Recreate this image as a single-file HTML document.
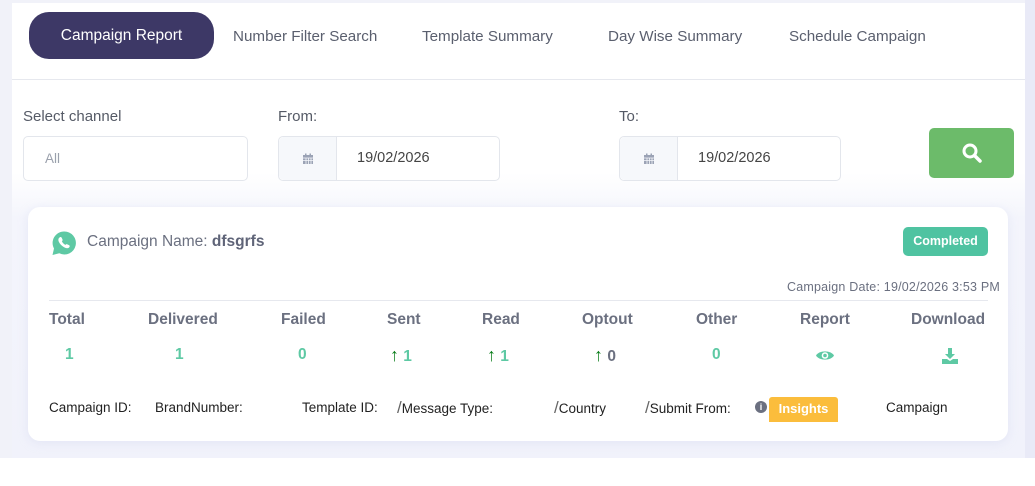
<!DOCTYPE html>
<html><head><style>
*{margin:0;padding:0;box-sizing:border-box}
body{width:1035px;height:486px;background:#fff;font-family:"Liberation Sans",sans-serif;position:relative;overflow:hidden;color:#555}
.a{position:absolute;white-space:nowrap}
.bgl{position:absolute;left:0;top:0;width:12px;height:458px;background:#f1f2f9}
.bgr{position:absolute;left:1025px;top:0;width:10px;height:458px;background:#e9eaf7}
.bgt{position:absolute;left:0;top:0;width:1035px;height:3px;background:#f1f2f9}
.panel{position:absolute;left:12px;top:3px;width:1013px;height:455px;border-radius:10px 10px 0 0;background:linear-gradient(#fff 0,#fff 170px,#f4f5fc 215px,#f1f2fb 455px)}
.tab{font-size:15.2px;color:#5a5f6e;top:28px}
.inp{position:absolute;border:1px solid #e3e6ec;border-radius:5px;background:#fff;height:45px}
.cal{position:absolute;left:0;top:0;width:58px;height:43px;background:#f6f8fb;border-right:1px solid #e3e6ec;border-radius:5px 0 0 5px}
.lbl{font-size:15px;color:#555a66;top:108px}
.h{font-size:15.5px;font-weight:bold;color:#6b7080;top:311px}
.v{font-size:15.5px;font-weight:bold;color:#5ec9a4;top:346px;line-height:18px}
.ar{color:#0a7d1a;font-size:18px;font-weight:bold}
.f{font-size:13.5px;color:#222;top:399px;line-height:18px}
.sl{font-size:17px;color:#666;line-height:18px}
</style></head><body>
<div class="bgt"></div><div class="bgl"></div><div class="bgr"></div>
<div class="panel"></div>
<div class="a" style="left:12px;top:79px;width:1013px;height:1px;background:#e6e8ee"></div>
<div class="a" style="left:29px;top:12px;width:185px;height:47px;border-radius:20px;background:#3d3866;color:#fff;font-size:15.5px;text-align:center;line-height:47px">Campaign Report</div>
<div class="a tab" style="left:233px">Number Filter Search</div>
<div class="a tab" style="left:422px">Template Summary</div>
<div class="a tab" style="left:608px">Day Wise Summary</div>
<div class="a tab" style="left:789px">Schedule Campaign</div>

<div class="a lbl" style="left:23px">Select channel</div>
<div class="a lbl" style="left:278px">From:</div>
<div class="a lbl" style="left:619px">To:</div>
<div class="inp" style="left:23px;top:136px;width:225px"><span class="a" style="left:21px;top:14px;font-size:13.5px;color:#9aa0ac">All</span></div>
<div class="inp" style="left:278px;top:136px;width:222px"><div class="cal"><svg class="a" style="left:23px;top:16px" width="12" height="12" viewBox="0 0 12 12"><rect x="1" y="2" width="10" height="9" fill="#9ba3b5"/><rect x="3" y="0.5" width="1.5" height="3" fill="#9ba3b5"/><rect x="7.5" y="0.5" width="1.5" height="3" fill="#9ba3b5"/><path d="M1 5H11M1 7.5H11M4 5V11M6.5 5V11M9 5V11" stroke="#f6f8fb" stroke-width=".8"/></svg></div><span class="a" style="left:78px;top:13px;font-size:14.5px;color:#444">19/02/2026</span></div>
<div class="inp" style="left:619px;top:136px;width:222px"><div class="cal"><svg class="a" style="left:23px;top:16px" width="12" height="12" viewBox="0 0 12 12"><rect x="1" y="2" width="10" height="9" fill="#9ba3b5"/><rect x="3" y="0.5" width="1.5" height="3" fill="#9ba3b5"/><rect x="7.5" y="0.5" width="1.5" height="3" fill="#9ba3b5"/><path d="M1 5H11M1 7.5H11M4 5V11M6.5 5V11M9 5V11" stroke="#f6f8fb" stroke-width=".8"/></svg></div><span class="a" style="left:78px;top:13px;font-size:14.5px;color:#444">19/02/2026</span></div>
<div class="a" style="left:929px;top:128px;width:85px;height:50px;background:#6cbb6a;border-radius:5px"><svg class="a" style="left:32px;top:14px" width="22" height="22" viewBox="0 0 22 22"><circle cx="9" cy="9" r="6" fill="none" stroke="#fff" stroke-width="3"/><path d="M13.5 13.5L19 19" stroke="#fff" stroke-width="3.5" stroke-linecap="round"/></svg></div>

<div class="a" style="left:28px;top:207px;width:980px;height:234px;background:#fff;border-radius:12px;box-shadow:0 2px 10px rgba(200,205,235,.35)"></div>
<svg class="a" style="left:51px;top:230px" width="26" height="26" viewBox="0 0 26 26"><path d="M13 1.5A11.5 11.5 0 0 0 3 18.5L1.5 25l6.8-1.7A11.5 11.5 0 1 0 13 1.5z" fill="#5ec9a4"/><path d="M8.5 7.5c1-.8 1.8-.5 2.2.3l.9 2c.2.6-.2 1-.7 1.5.6 1.5 2 2.9 3.6 3.6.5-.5.9-1 1.5-.7l2 .9c.8.4 1 1.2.3 2.2-1 1.3-3 1.3-5.2 0-2.3-1.3-4.3-3.3-5.3-5.5-.8-1.8-.5-3.4.7-4.3z" fill="#fff"/></svg>
<div class="a" style="left:87px;top:233px;font-size:15.5px;color:#6b7080">Campaign Name: <b style="color:#5f6478">dfsgrfs</b></div>
<div class="a" style="left:903px;top:227px;width:85px;height:29px;background:#4fc3a1;border-radius:5px;color:#fff;font-size:12.5px;font-weight:bold;text-align:center;line-height:29px">Completed</div>
<div class="a" style="left:787px;top:280px;font-size:12.5px;color:#6b7080;letter-spacing:.2px">Campaign Date: 19/02/2026 3:53 PM</div>
<div class="a" style="left:49px;top:300px;width:939px;height:1px;background:#e6e8ee"></div>

<div class="a h" style="left:49px">Total</div>
<div class="a h" style="left:148px">Delivered</div>
<div class="a h" style="left:281px">Failed</div>
<div class="a h" style="left:387px">Sent</div>
<div class="a h" style="left:482px">Read</div>
<div class="a h" style="left:582px">Optout</div>
<div class="a h" style="left:696px">Other</div>
<div class="a h" style="left:800px">Report</div>
<div class="a h" style="left:911px">Download</div>

<div class="a v" style="left:65px">1</div>
<div class="a v" style="left:175px">1</div>
<div class="a v" style="left:298px">0</div>
<div class="a v" style="left:390px"><span class="ar">&#8593;</span> 1</div>
<div class="a v" style="left:487px"><span class="ar">&#8593;</span> 1</div>
<div class="a v" style="left:594px"><span class="ar">&#8593;</span> <span style="color:#6b7080">0</span></div>
<div class="a v" style="left:712px">0</div>
<svg class="a" style="left:815px;top:349px" width="20" height="13" viewBox="0 0 20 13"><path d="M1 6.5C4 1 16 1 19 6.5 16 12 4 12 1 6.5z" fill="#5ec9a4"/><circle cx="10" cy="6.5" r="3.3" fill="#fff"/><circle cx="10" cy="6.5" r="1.8" fill="#5ec9a4"/></svg>
<svg class="a" style="left:941px;top:347px" width="18" height="18" viewBox="0 0 18 18"><path d="M7 1h4v6h3l-5 5-5-5h3z" fill="#5ec9a4"/><path d="M1 12h5l3 2 3-2h5v5H1z" fill="#5ec9a4"/></svg>

<div class="a f" style="left:49px">Campaign ID:</div>
<div class="a f" style="left:155px">BrandNumber:</div>
<div class="a f" style="left:302px">Template ID:</div>
<div class="a f" style="left:397px"><span class="sl">/</span>Message Type:</div>
<div class="a f" style="left:554px"><span class="sl">/</span>Country</div>
<div class="a f" style="left:645px"><span class="sl">/</span>Submit From:</div>
<div class="a" style="left:755px;top:401px;width:12px;height:12px;border-radius:50%;background:#6b7080;color:#fff;font-size:9px;font-weight:bold;text-align:center;line-height:12px">i</div>
<div class="a" style="left:769px;top:397px;width:69px;height:25px;background:#fbbd3c;border-radius:3px 3px 0 0;color:#fff;font-size:13px;font-weight:bold;text-align:center;line-height:24px">Insights</div>
<div class="a f" style="left:886px">Campaign</div>
</body></html>
